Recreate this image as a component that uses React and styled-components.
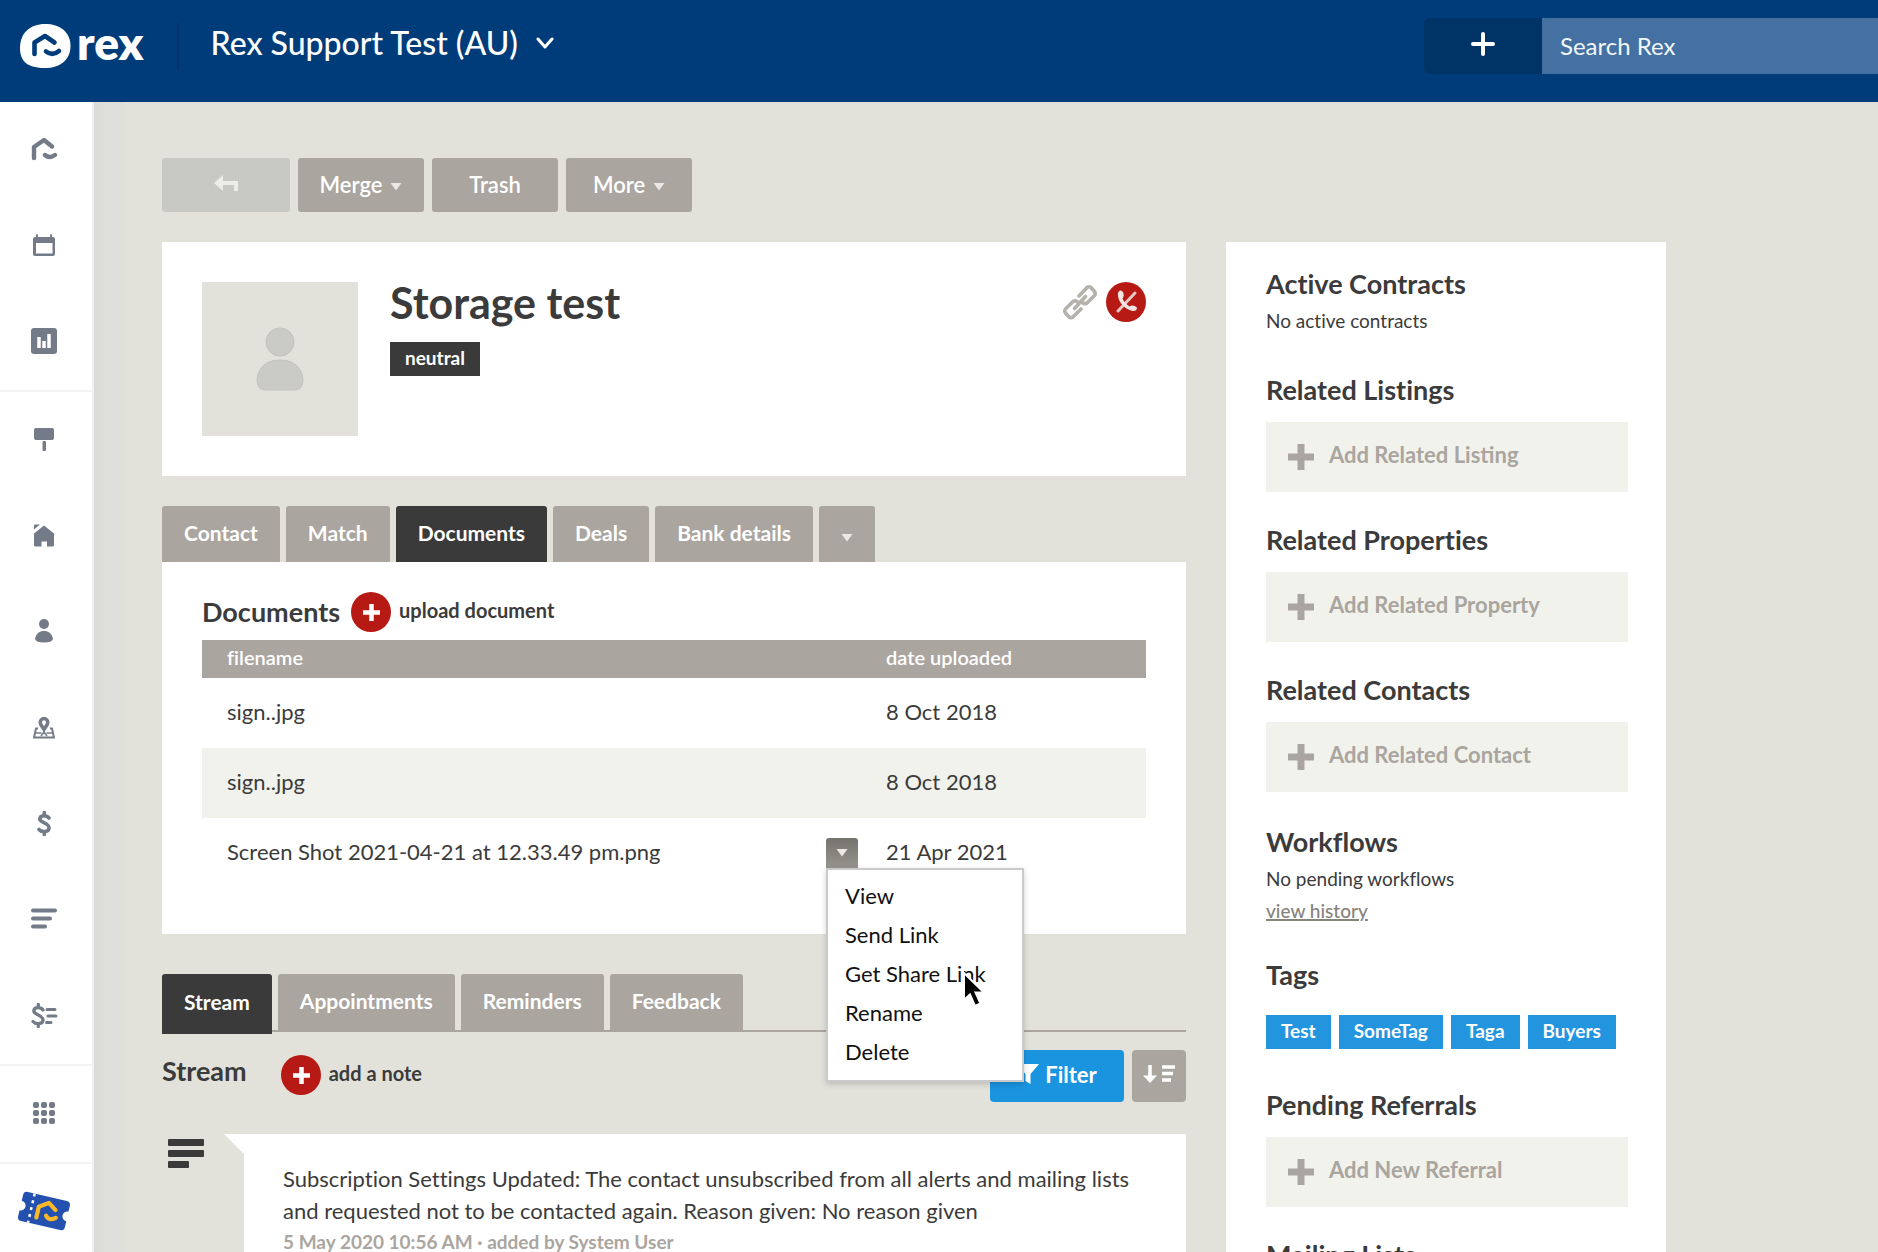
import React from 'react';
import styled, { createGlobalStyle } from 'styled-components';

const GlobalStyle = createGlobalStyle`
  * {
    box-sizing: border-box;
  }

  body {
    margin: 0;
    background: #e2e2db;
    color: #3b3b3b;
    font-family: Lato, "Liberation Sans", sans-serif;
    font-size: 22px;
    font-variant-ligatures: none;
  }

  button,
  input {
    font-family: inherit;
    border: 0;
    padding: 0;
    margin: 0;
  }

  button {
    cursor: pointer;
  }

  h1, h2, h3, p, ul {
    margin: 0;
    padding: 0;
  }

  svg {
    display: block;
    flex: none;
  }
`;

const Page = styled.div`
  display: flex;
  flex-direction: column;
  height: 100vh;
  overflow: hidden;
`;

const Header = styled.header`
  display: flex;
  flex: none;
  align-items: flex-start;
  height: 102px;
  padding-left: 20px;
  background: #003c7a;
  color: #fff;
`;

const Brand = styled.a`
  display: flex;
  align-items: center;
  gap: 6px;
  height: 48px;
  margin-top: 22px;
  padding-right: 33px;
  border-right: 2px solid #00346a;
  color: #fff;
  font-size: 46px;
  font-weight: 800;
  line-height: 40px;
  text-decoration: none;

  span {
    padding-bottom: 6px;
  }
`;

const AccountButton = styled.button`
  display: flex;
  align-items: center;
  gap: 18px;
  margin: 20px auto 0 32px;
  background: none;
  color: #fff;
  font-size: 32px;
  font-weight: 500;
  line-height: 46px;
`;

const HeaderTools = styled.div`
  display: flex;
  width: 454px;
  height: 56px;
  margin-top: 18px;
`;

const QuickAdd = styled.button`
  display: flex;
  align-items: center;
  justify-content: center;
  width: 118px;
  padding-bottom: 4px;
  border-radius: 6px 0 0 6px;
  background: #003366;
`;

const SearchInput = styled.input`
  flex: 1;
  min-width: 0;
  padding: 0 18px 2px;
  background: #4571a2;
  color: #fff;
  font-size: 24px;
  outline: none;

  &::placeholder {
    color: #f2f6fa;
    opacity: 1;
  }
`;

const Body = styled.div`
  display: flex;
  flex: 1;
  min-height: 0;
`;

const Sidebar = styled.nav`
  flex: none;
  width: 94px;
  border-right: 2px solid #f0f1f5;
  background: #fff;
`;

const NavGroup = styled.div`
  border-bottom: 2px solid #f1f3f5;
`;

const NavLink = styled.a`
  display: flex;
  align-items: center;
  justify-content: center;
  height: 96px;
  padding: 0 4px 2px 0;
  color: #737b88;
`;

const Content = styled.main`
  flex: 1;
  min-width: 0;
  padding: 56px 40px 0 68px;
  background: linear-gradient(90deg, #dadbd8 0, #dedfda 10px, #dedfda 28px, #e2e2db 34px);
`;

const Toolbar = styled.div`
  display: flex;
  gap: 8px;
  margin-bottom: 30px;
`;

const ToolButton = styled.button`
  display: flex;
  align-items: center;
  justify-content: center;
  gap: 8px;
  width: ${(props) => (props.disabled ? '128px' : '126px')};
  height: 54px;
  padding-bottom: 2px;
  border-radius: 3px;
  background: ${(props) => (props.disabled ? '#c8c9c3' : '#aaa59f')};
  color: #fff;
  font-size: 22px;
  font-weight: 600;
`;

const Columns = styled.div`
  display: flex;
  align-items: flex-start;
  gap: 40px;
  max-width: 1504px;
`;

const MainColumn = styled.div`
  flex: 1;
  min-width: 0;
`;

const ProfileCard = styled.section`
  display: flex;
  gap: 32px;
  padding: 40px;
  margin-bottom: 30px;
  background: #fff;
`;

const Avatar = styled.div`
  display: flex;
  align-items: center;
  justify-content: center;
  width: 156px;
  height: 154px;
  background: #e2e2db;
`;

const ProfileInfo = styled.div`
  flex: 1;
`;

const ContactName = styled.h1`
  margin-bottom: 18px;
  font-size: 43px;
  font-weight: 700;
  line-height: 42px;
`;

const Chip = styled.span`
  display: inline-block;
  padding: 0 15px 2px;
  background: ${(props) => props.$color};
  color: #fff;
  font-size: 19px;
  font-weight: 700;
  line-height: 32px;
`;

const ProfileActions = styled.div`
  display: flex;
  align-items: flex-start;
  gap: 8px;
`;

const IconButton = styled.button`
  display: flex;
  align-items: center;
  height: 40px;
  background: none;
`;

const Tabs = styled.div`
  display: flex;
  gap: 6px;
`;

const Tab = styled.button`
  display: flex;
  align-items: center;
  height: 56px;
  padding: 0 22px 4px;
  border-radius: 3px 3px 0 0;
  background: ${(props) => (props.$active ? '#3a3a3a' : '#aaa59f')};
  color: #fff;
  font-size: 21px;
  font-weight: 700;
`;

const StreamTabs = styled(Tabs)`
  height: 58px;
  margin-top: 40px;
  border-bottom: 2px solid #aaa59f;

  ${Tab}[aria-selected="true"] {
    height: 60px;
    padding-bottom: 6px;
  }
`;

const DocumentsCard = styled.section`
  padding: 30px 40px 46px;
  background: #fff;
`;

const SectionBar = styled.div`
  display: flex;
  align-items: center;
  gap: ${(props) => props.$gap};
`;

const SectionTitle = styled.h2`
  font-size: 27px;
  font-weight: 700;
  line-height: 32px;
`;

const RoundAction = styled.button`
  display: flex;
  align-items: center;
  gap: 8px;
  background: none;
  color: #3b3b3b;
  font-size: 20px;
  font-weight: 700;
  line-height: 36px;

  span {
    padding-bottom: 4px;
  }
`;

const DocumentTable = styled.table`
  width: 100%;
  margin-top: 8px;
  border-collapse: collapse;
  font-size: 22px;

  th {
    height: 38px;
    padding: 0 0 4px 25px;
    background: #aaa59f;
    color: #fff;
    font-size: 20px;
    font-weight: 600;
    text-align: left;
  }

  td {
    height: 70px;
    padding: 0 0 0 25px;
  }

  tbody tr:nth-child(even) {
    background: #f1f2ec;
  }

  th:last-child,
  td:last-child {
    width: 285px;
  }
`;

const FileCell = styled.div`
  display: flex;
  align-items: center;
  justify-content: space-between;
`;

const CellText = styled.span`
  display: block;
  padding-bottom: 4px;
`;

const RowMenu = styled.div`
  position: relative;
  margin-right: 3px;
`;

const RowMenuButton = styled.button`
  display: flex;
  align-items: center;
  justify-content: center;
  width: 32px;
  height: 30px;
  border-radius: 3px 3px 0 0;
  background: linear-gradient(#75736d, #97948d);
`;

const Menu = styled.ul`
  position: absolute;
  top: 30px;
  left: 0;
  z-index: 2;
  width: 198px;
  padding: 6px 0 9px;
  border: 2px solid #cacaca;
  background: #fff;
  box-shadow: 0 2px 6px rgba(0, 0, 0, 0.18);
  list-style: none;
`;

const MenuItem = styled.button`
  display: block;
  width: 100%;
  padding: 0 17px;
  background: none;
  color: #111;
  font-size: 22px;
  line-height: 39px;
  text-align: left;
  white-space: nowrap;
`;

const Pointer = styled.svg`
  position: absolute;
  top: 101px;
  left: 134px;
  pointer-events: none;
`;

const StreamBar = styled.div`
  display: flex;
  align-items: flex-start;
  justify-content: space-between;
  margin-top: 18px;
`;

const StreamHeading = styled(SectionBar)`
  padding-top: 5px;
  align-items: flex-start;
`;

const ButtonPair = styled.div`
  display: flex;
  gap: 8px;
`;

const FilterButton = styled.button`
  display: flex;
  align-items: center;
  justify-content: center;
  gap: 6px;
  width: 134px;
  height: 52px;
  padding-bottom: 4px;
  border-radius: 4px;
  background: #1b94e0;
  color: #fff;
  font-size: 22px;
  font-weight: 700;
`;

const SortButton = styled(FilterButton)`
  width: 54px;
  background: #aaa59f;
`;

const StreamEntry = styled.article`
  display: flex;
  gap: 20px;
  margin-top: 32px;
`;

const EntryIcon = styled.div`
  width: 42px;
  padding: 5px 0 0 6px;
`;

const EntryBody = styled.div`
  flex: 1;
  min-width: 0;
  padding: 29px 30px 40px 59px;
  background: #fff;
  clip-path: polygon(0 0, 100% 0, 100% 100%, 20px 100%, 20px 20px);
  line-height: 32px;
`;

const EntryMeta = styled.p`
  color: #aaa59f;
  font-size: 19px;
  font-weight: 700;
  line-height: 30px;
`;

const SidePanel = styled.aside`
  flex: none;
  width: 440px;
  min-height: 1100px;
  padding: 26px 38px 0 40px;
  background: #fff;
`;

const PanelSection = styled.section`
  margin-bottom: 32px;
`;

const WorkflowSection = styled(PanelSection)`
  padding-top: 2px;
`;

const PanelText = styled.p`
  margin-top: ${(props) => (props.$first ? '5px' : '0')};
  padding-bottom: ${(props) => (props.$last ? '5px' : '0')};
  font-size: 19px;
  line-height: 32px;
`;

const HistoryLink = styled.a`
  color: #86837b;
  font-weight: 500;
  text-decoration-thickness: 2px;
`;

const AddButton = styled.button`
  display: flex;
  align-items: center;
  gap: 15px;
  width: 100%;
  height: 70px;
  margin-top: 16px;
  padding-left: 22px;
  background: #f1f2ec;
  color: #aaa59f;
  font-size: 22px;
  font-weight: 700;

  span {
    padding-bottom: 6px;
  }
`;

const TagList = styled.div`
  display: flex;
  gap: 8px;
  padding: 24px 0 8px;
`;

const HOUSE_MARK = 'M3 21V10L13 3L21 9.5M14 18Q18.500 22 24 18';

const RexMark = ({ width, color = 'currentColor', stroke = 4.4 }) => (
  <svg width={width} viewBox="0 0 27 24" fill="none" stroke={color} strokeWidth={stroke} strokeLinecap="round" strokeLinejoin="round">
    <path d={HOUSE_MARK} />
  </svg>
);

const CaretSvg = styled.svg`
  margin-top: ${(props) => props.$drop};
`;

const Caret = ({ drop = '6px' }) => (
  <CaretSvg $drop={drop} width="12" height="8" viewBox="0 0 11 8">
    <path d="M0 0H11L5.500 7.500Z" fill="#e9e8e5" />
  </CaretSvg>
);

const PlusCircle = () => (
  <svg width="40" height="40" viewBox="0 0 40 40">
    <circle cx="20" cy="20" r="20" fill="#b71914" />
    <path d="M20.500 12V29M12 20.500H29" stroke="#fff" strokeWidth="4.500" />
  </svg>
);

const CalendarIcon = () => (
  <svg width="22" height="22" viewBox="0 0 22 22" fill="currentColor">
    <path fillRule="evenodd" d="M2 3H3V1.500Q3 0 4 0T5 1.500V3H17V1.500Q17 0 18 0T19 1.500V3H20Q22 3 22 5V20Q22 22 20 22H2Q0 22 0 20V5Q0 3 2 3ZM3 9V19.500H19.500V9Z" />
  </svg>
);

const ChartIcon = () => (
  <svg width="26" height="26" viewBox="0 0 26 26">
    <rect width="26" height="26" rx="3" fill="currentColor" />
    <path d="M8 9V20M13 13V20M18 6V20" stroke="#fff" strokeWidth="3.500" />
  </svg>
);

const SignIcon = () => (
  <svg width="20" height="23" viewBox="0 0 20 23" fill="currentColor">
    <rect width="20" height="12" rx="2" />
    <rect x="8.500" y="13" width="3.500" height="10" rx="1" />
  </svg>
);

const HouseIcon = () => (
  <svg width="20" height="23" viewBox="0 0 20 23" fill="currentColor">
    <path d="M0 9.500L10 1.500L20 9.500V21Q20 22.500 18.500 22.500H13V17.500H7.500V22.500H1.500Q0 22.500 0 21ZM0 1Q0 .500 1 .500H6L0 5.500Z" />
  </svg>
);

const PersonIcon = () => (
  <svg width="18" height="24" viewBox="0 0 18 24" fill="currentColor">
    <circle cx="9" cy="5" r="5" />
    <path d="M0 20C1 14.500 4.500 12 9 12S17 14.500 18 20Q17 23.500 9 23.500T0 20Z" />
  </svg>
);

const MapIcon = () => (
  <svg width="22" height="23" viewBox="0 0 22 23" fill="none" stroke="currentColor" strokeWidth="2">
    <path d="M5 12.500H3L1 21.500H21L19 12.500H17" />
    <path d="M2.500 17H8.500M13.500 17H19.500M8 20L11 16L14 20" strokeWidth="1.500" />
    <path d="M11 2.500A3.800 3.800 0 0 1 14.800 6.300C14.800 9 12.500 10.500 11 13.500C9.500 10.500 7.200 9 7.200 6.300A3.800 3.800 0 0 1 11 2.500Z" strokeWidth="3.500" />
  </svg>
);

const DOLLAR = 'M12 7C10 4 3 3.500 2.800 8C2.800 12 12 11.500 12 17C12 21.500 4.500 21.500 2 18.500M7.300 1.500V4M7.300 21V23.500';

const DollarIcon = () => (
  <svg width="15" height="25" viewBox="0 0 15 25" fill="none" stroke="currentColor" strokeWidth="3.600" strokeLinecap="round">
    <path d={DOLLAR} />
  </svg>
);

const ListIcon = () => (
  <svg width="26" height="22" viewBox="0 0 26 22" fill="none" stroke="currentColor" strokeWidth="4" strokeLinecap="round">
    <path d="M2 2.500H24M2 10.500H19M2 18.500H14" />
  </svg>
);

const DollarListIcon = () => (
  <svg width="27" height="25" viewBox="0 0 27 25" fill="none" stroke="currentColor" strokeWidth="3.300" strokeLinecap="round">
    <path d={DOLLAR} />
    <path d="M16 6.500H24M17 13H25M15.500 19.500H20" strokeWidth="3" />
  </svg>
);

const GridIcon = () => (
  <svg width="22" height="22" viewBox="0 0 22 22" fill="currentColor">
    {[0, 8, 16].map((y) =>
      [0, 8, 16].map((x) => <rect key={`${x}-${y}`} x={x} y={y} width="6" height="6" rx="2" />)
    )}
  </svg>
);

const TicketIcon = () => (
  <svg width="54" height="42" viewBox="0 0 54 42">
    <g transform="rotate(13 27 21)">
      <path d="M7 6H47Q51 6 51 10V16A5 5 0 0 0 51 26V32Q51 36 47 36H7Q3 36 3 32V26A5 5 0 0 0 3 16V10Q3 6 7 6Z" fill="#2450b0" />
      <path d="M14 6V36" stroke="#fff" strokeWidth="2.500" strokeDasharray="3 4" />
      <path d="M21 29V18L30 12L38 17.500M30 25Q34 30 40 25" fill="none" stroke="#fcb827" strokeWidth="4.200" strokeLinecap="round" strokeLinejoin="round" />
    </g>
  </svg>
);

const NAV_GROUPS = [
  [
    ['Home', <RexMark width={27} />],
    ['Calendar', <CalendarIcon />],
    ['Reports', <ChartIcon />],
  ],
  [
    ['Listings', <SignIcon />],
    ['Properties', <HouseIcon />],
    ['Contacts', <PersonIcon />],
    ['Map', <MapIcon />],
    ['Sales', <DollarIcon />],
    ['Stream', <ListIcon />],
    ['Accounts', <DollarListIcon />],
  ],
  [['Apps', <GridIcon />]],
];

const DOCUMENTS = [
  { name: 'sign..jpg', date: '8 Oct 2018' },
  { name: 'sign..jpg', date: '8 Oct 2018' },
  { name: 'Screen Shot 2021-04-21 at 12.33.49 pm.png', date: '21 Apr 2021', open: true },
];

const MENU_ITEMS = ['View', 'Send Link', 'Get Share Link', 'Rename', 'Delete'];

function TopBar() {
  return (
    <Header>
      <Brand href="#home">
        <svg width="51" height="44" viewBox="0 0 51 44">
          <path d="M25 0C40 0 50.500 8 50.500 22C50.500 36 40 44 25 44C8 44 0 38 0 24C0 9 10 0 25 0Z" fill="#fff" />
          <path d="M14.500 30V18.500L25 12L34.500 18.500M26 27.500Q32.500 32.500 39 27" fill="none" stroke="#003c7a" strokeWidth="4.600" strokeLinecap="round" strokeLinejoin="round" />
        </svg>
        <span>rex</span>
      </Brand>
      <AccountButton>
        Rex Support Test (AU)
        <svg width="18" height="12" viewBox="0 0 18 12" fill="none" stroke="#fff" strokeWidth="3" strokeLinecap="round" strokeLinejoin="round">
          <path d="M2 2L9 10L16 2" />
        </svg>
      </AccountButton>
      <HeaderTools>
        <QuickAdd aria-label="Add">
          <svg width="24" height="24" viewBox="0 0 24 24" stroke="#fff" strokeWidth="4" strokeLinecap="round">
            <path d="M12 2V22M2 12H22" />
          </svg>
        </QuickAdd>
        <SearchInput type="text" aria-label="Search Rex" placeholder="Search Rex" />
      </HeaderTools>
    </Header>
  );
}

function SideNav() {
  return (
    <Sidebar>
      {NAV_GROUPS.map((group, index) => (
        <NavGroup key={index}>
          {group.map(([label, icon]) => (
            <NavLink key={label} href="#nav" aria-label={label}>{icon}</NavLink>
          ))}
        </NavGroup>
      ))}
      <NavLink href="#nav" aria-label="Rewards"><TicketIcon /></NavLink>
    </Sidebar>
  );
}

function Profile() {
  return (
    <ProfileCard>
      <Avatar>
        <svg width="48" height="66" viewBox="0 0 48 66" fill="#cbcbc5" stroke="#c3c1bc">
          <ellipse cx="24" cy="16" rx="14" ry="14" />
          <path d="M1 54C2 40 12 34 24 34S46 40 47 54Q47 64 38 64H10Q1 64 1 54Z" />
        </svg>
      </Avatar>
      <ProfileInfo>
        <ContactName>Storage test</ContactName>
        <Chip $color="#3a3a3a">neutral</Chip>
      </ProfileInfo>
      <ProfileActions>
        <IconButton aria-label="Copy link">
          <svg width="36" height="38" viewBox="0 0 36 38" fill="none" stroke="#b5b1ab" strokeWidth="3.600" strokeLinejoin="round" strokeLinecap="round">
            <path d="M17 13L25 4.500Q27 3 29 4.500L32.500 8.500Q34 10.500 32.500 12.500L25 20Q23 21.500 21 20L19.500 18.500" />
            <path d="M19 26L11 34Q9 35.500 7 34L3.500 30Q2 28 3.500 26L11 18.500Q13 17 15 18.500L16.500 20" />
            <path d="M12.500 25.500L23.500 13.500" />
          </svg>
        </IconButton>
        <IconButton aria-label="Do not call">
          <svg width="40" height="40" viewBox="0 0 40 40">
            <circle cx="20" cy="20" r="20" fill="#b71914" />
            <path d="M12 29L29 11" stroke="#e9c9c6" strokeWidth="3" strokeLinecap="round" />
            <path d="M12 11Q13.500 7 16.500 9.500Q19 13 16.500 16.500Q18 20.500 23.500 24.500Q27 22 31 25.500Q31 29 27 29C20 28 11 20 12 11Z" fill="#f1e6e4" />
          </svg>
        </IconButton>
      </ProfileActions>
    </ProfileCard>
  );
}

function Documents() {
  return (
    <>
      <Tabs role="tablist">
        {['Contact', 'Match', 'Documents', 'Deals', 'Bank details'].map((name) => (
          <Tab key={name} role="tab" aria-selected={name === 'Documents'} $active={name === 'Documents'}>{name}</Tab>
        ))}
        <Tab aria-label="More tabs"><Caret drop="12px" /></Tab>
      </Tabs>
      <DocumentsCard>
        <SectionBar $gap="11px">
          <SectionTitle>Documents</SectionTitle>
          <RoundAction><PlusCircle /><span>upload document</span></RoundAction>
        </SectionBar>
        <DocumentTable>
          <thead>
            <tr>
              <th>filename</th>
              <th>date uploaded</th>
            </tr>
          </thead>
          <tbody>
            {DOCUMENTS.map((doc, index) => (
              <tr key={index}>
                <td>
                  <FileCell>
                    <CellText>{doc.name}</CellText>
                    {doc.open && (
                      <RowMenu>
                        <RowMenuButton aria-label="Document actions"><Caret drop="0" /></RowMenuButton>
                        <Menu>
                          {MENU_ITEMS.map((item) => (
                            <li key={item}><MenuItem>{item}</MenuItem></li>
                          ))}
                          <Pointer width="24" height="38" viewBox="0 0 24 38">
                            <path d="M2 2V29L8 23.500L13 35L18.500 32.500L13.500 21.500H22Z" fill="#000" stroke="#fff" strokeWidth="2" />
                          </Pointer>
                        </Menu>
                      </RowMenu>
                    )}
                  </FileCell>
                </td>
                <td><CellText>{doc.date}</CellText></td>
              </tr>
            ))}
          </tbody>
        </DocumentTable>
      </DocumentsCard>
    </>
  );
}

function Stream() {
  return (
    <>
      <StreamTabs role="tablist">
        {['Stream', 'Appointments', 'Reminders', 'Feedback'].map((name) => (
          <Tab key={name} role="tab" aria-selected={name === 'Stream'} $active={name === 'Stream'}>{name}</Tab>
        ))}
      </StreamTabs>
      <StreamBar>
        <StreamHeading $gap="34px">
          <SectionTitle>Stream</SectionTitle>
          <RoundAction><PlusCircle /><span>add a note</span></RoundAction>
        </StreamHeading>
        <ButtonPair>
          <FilterButton>
            <svg width="22" height="22" viewBox="0 0 22 22" fill="#fff">
              <path d="M0 1H22L13.500 11V21L8.500 18V11Z" />
            </svg>
            Filter
          </FilterButton>
          <SortButton aria-label="Sort">
            <svg width="32" height="20" viewBox="0 0 32 20" fill="none" stroke="#fff" strokeWidth="3.500">
              <path d="M7 1V13M19 3H32M19 9.500H30M19 16H28" />
              <path d="M0 11.500H14L7 19Z" fill="#fff" stroke="none" />
            </svg>
          </SortButton>
        </ButtonPair>
      </StreamBar>
      <StreamEntry>
        <EntryIcon>
          <svg width="36" height="30" viewBox="0 0 36 30" fill="#3a3a3a">
            <rect width="36" height="7" rx="1" />
            <rect y="11" width="36" height="7" rx="1" />
            <rect y="22" width="21" height="7" rx="1" />
          </svg>
        </EntryIcon>
        <EntryBody>
          <p>
            Subscription Settings Updated: The contact unsubscribed from all alerts and mailing lists
            and requested not to be contacted again. Reason given: No reason given
          </p>
          <EntryMeta>5 May 2020 10:56 AM · added by System User</EntryMeta>
        </EntryBody>
      </StreamEntry>
    </>
  );
}

function AddSection({ title, action }) {
  return (
    <PanelSection>
      <SectionTitle>{title}</SectionTitle>
      {action && (
        <AddButton>
          <svg width="26" height="26" viewBox="0 0 26 26" stroke="currentColor" strokeWidth="7">
            <path d="M13 0V26M0 13H26" />
          </svg>
          <span>{action}</span>
        </AddButton>
      )}
    </PanelSection>
  );
}

function Summary() {
  return (
    <SidePanel>
      <PanelSection>
        <SectionTitle>Active Contracts</SectionTitle>
        <PanelText $first $last>No active contracts</PanelText>
      </PanelSection>
      <AddSection title="Related Listings" action="Add Related Listing" />
      <AddSection title="Related Properties" action="Add Related Property" />
      <AddSection title="Related Contacts" action="Add Related Contact" />
      <WorkflowSection>
        <SectionTitle>Workflows</SectionTitle>
        <PanelText $first>No pending workflows</PanelText>
        <PanelText><HistoryLink href="#history">view history</HistoryLink></PanelText>
      </WorkflowSection>
      <PanelSection>
        <SectionTitle>Tags</SectionTitle>
        <TagList>
          {['Test', 'SomeTag', 'Taga', 'Buyers'].map((tag) => (
            <Chip key={tag} $color="#2395df">{tag}</Chip>
          ))}
        </TagList>
      </PanelSection>
      <AddSection title="Pending Referrals" action="Add New Referral" />
      <AddSection title="Mailing Lists" />
    </SidePanel>
  );
}

function App() {
  return (
    <Page>
      <GlobalStyle />
      <TopBar />
      <Body>
        <SideNav />
        <Content>
          <Toolbar>
            <ToolButton disabled aria-label="Back">
              <svg width="24" height="18" viewBox="0 0 24 18" fill="none" stroke="#ecece8" strokeWidth="4">
                <path d="M7 8H22V16" />
                <path d="M0 8L9 0V16Z" fill="#ecece8" stroke="none" />
              </svg>
            </ToolButton>
            <ToolButton>Merge<Caret /></ToolButton>
            <ToolButton>Trash</ToolButton>
            <ToolButton>More<Caret /></ToolButton>
          </Toolbar>
          <Columns>
            <MainColumn>
              <Profile />
              <Documents />
              <Stream />
            </MainColumn>
            <Summary />
          </Columns>
        </Content>
      </Body>
    </Page>
  );
}

export default App;
